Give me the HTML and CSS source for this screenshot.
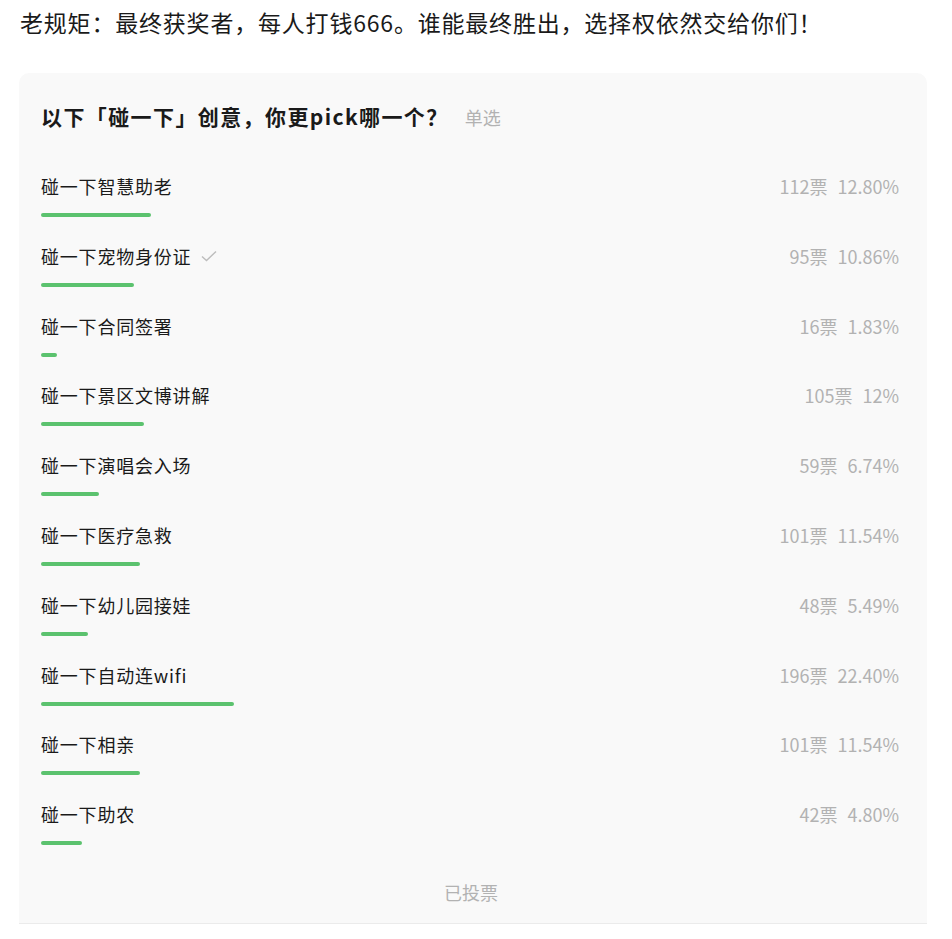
FILE: index.html
```html
<!DOCTYPE html>
<html lang="zh-CN">
<head>
  <meta charset="UTF-8" />
  <title>碰一下 创意投票</title>
  <meta name="viewport" content="width=device-width, initial-scale=1.0" />
  <link rel="stylesheet" href="styles.css">
</head>
<body>
  <p class="intro">老规矩：最终获奖者，每人打钱666。谁能最终胜出，选择权依然交给你们！</p>

  <section class="vote">
    <h2 class="vote-title">以下「碰一下」创意，你更pick哪一个？<span class="vote-type">单选</span></h2>

    <ul class="options">
      <li class="option">
        <div class="option-head">
          <span class="option-name">碰一下智慧助老</span>
          <span class="option-stat"><span>112票</span><span>12.80%</span></span>
        </div>
        <div class="bar"><div class="bar-fill" style="width: 12.80%"></div></div>
      </li>
      <li class="option">
        <div class="option-head">
          <span class="option-name">碰一下宠物身份证
            <svg class="check" width="16" height="12" viewBox="0 0 16 12"><path d="M1 6.5 L5.5 10.5 L15 1.5" fill="none" stroke="#bdbdbd" stroke-width="1.4"/></svg>
          </span>
          <span class="option-stat"><span>95票</span><span>10.86%</span></span>
        </div>
        <div class="bar"><div class="bar-fill" style="width: 10.86%"></div></div>
      </li>
      <li class="option">
        <div class="option-head">
          <span class="option-name">碰一下合同签署</span>
          <span class="option-stat"><span>16票</span><span>1.83%</span></span>
        </div>
        <div class="bar"><div class="bar-fill" style="width: 1.83%"></div></div>
      </li>
      <li class="option">
        <div class="option-head">
          <span class="option-name">碰一下景区文博讲解</span>
          <span class="option-stat"><span>105票</span><span>12%</span></span>
        </div>
        <div class="bar"><div class="bar-fill" style="width: 12%"></div></div>
      </li>
      <li class="option">
        <div class="option-head">
          <span class="option-name">碰一下演唱会入场</span>
          <span class="option-stat"><span>59票</span><span>6.74%</span></span>
        </div>
        <div class="bar"><div class="bar-fill" style="width: 6.74%"></div></div>
      </li>
      <li class="option">
        <div class="option-head">
          <span class="option-name">碰一下医疗急救</span>
          <span class="option-stat"><span>101票</span><span>11.54%</span></span>
        </div>
        <div class="bar"><div class="bar-fill" style="width: 11.54%"></div></div>
      </li>
      <li class="option">
        <div class="option-head">
          <span class="option-name">碰一下幼儿园接娃</span>
          <span class="option-stat"><span>48票</span><span>5.49%</span></span>
        </div>
        <div class="bar"><div class="bar-fill" style="width: 5.49%"></div></div>
      </li>
      <li class="option">
        <div class="option-head">
          <span class="option-name">碰一下自动连wifi</span>
          <span class="option-stat"><span>196票</span><span>22.40%</span></span>
        </div>
        <div class="bar"><div class="bar-fill" style="width: 22.40%"></div></div>
      </li>
      <li class="option">
        <div class="option-head">
          <span class="option-name">碰一下相亲</span>
          <span class="option-stat"><span>101票</span><span>11.54%</span></span>
        </div>
        <div class="bar"><div class="bar-fill" style="width: 11.54%"></div></div>
      </li>
      <li class="option">
        <div class="option-head">
          <span class="option-name">碰一下助农</span>
          <span class="option-stat"><span>42票</span><span>4.80%</span></span>
        </div>
        <div class="bar"><div class="bar-fill" style="width: 4.80%"></div></div>
      </li>
    </ul>

    <div class="vote-footer">已投票</div>
  </section>
</body>
</html>
```

FILE: styles.css
```css
body {
  margin: 0;
  padding: 0 25px 0 19px;
  background: #ffffff;
  font-family: "Noto Sans CJK SC", "Noto Sans", sans-serif;
  color: #1a1a1a;
}
.intro {
  margin: 0;
  padding-left: 1px;
  font-size: 23px;
  line-height: 44px;
  letter-spacing: 0.8px;
  color: #1a1a1a;
}
.vote {
  margin-top: 29px;
  background: #f9f9f9;
  border-radius: 10px 10px 0 0;
  border-bottom: 1px solid #ebebeb;
  padding: 28px 26px 8px 22px;
}
.vote-title {
  margin: 0 0 39px;
  font-size: 21px;
  line-height: 30px;
  font-weight: bold;
  letter-spacing: 1.4px;
  color: #1a1a1a;
}
.vote-type {
  margin-left: 16px;
  font-size: 18px;
  font-weight: normal;
  letter-spacing: 0;
  color: #b2b2b2;
}
.options {
  list-style: none;
  margin: 0;
  padding: 0;
}
.option {
  margin-bottom: 23.8px;
}
.option-head {
  display: flex;
  justify-content: space-between;
  align-items: center;
  height: 30px;
  padding-right: 2px;
}
.option-name {
  display: flex;
  align-items: center;
  gap: 10px;
  font-size: 18px;
  letter-spacing: 0.8px;
  color: #1a1a1a;
}
.option-stat {
  display: flex;
  gap: 10px;
  font-size: 18px;
  color: #b2b2b2;
}
.bar {
  margin-top: 12px;
  height: 4px;
}
.bar-fill {
  height: 4px;
  border-radius: 2px;
  background: #5bc26e;
}
.vote-footer {
  text-align: center;
  font-size: 18px;
  line-height: 46px;
  color: #b2b2b2;
}
```
